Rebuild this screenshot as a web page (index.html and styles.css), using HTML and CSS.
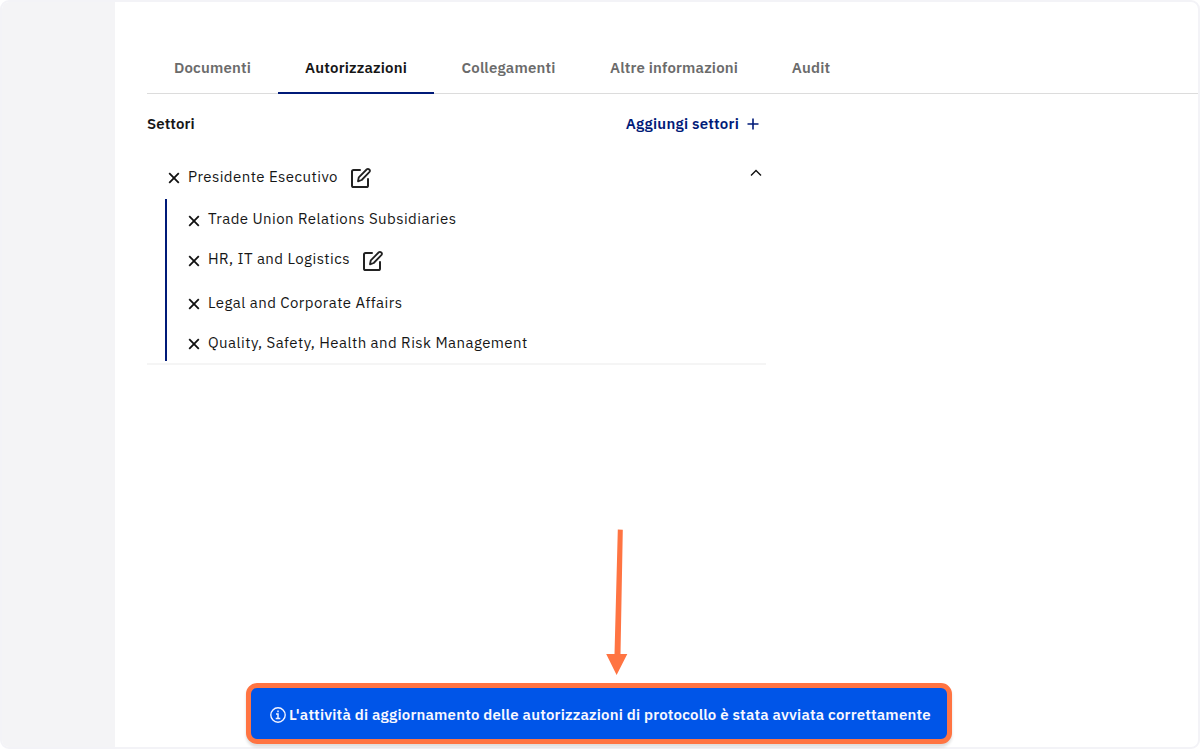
FILE: index.html
```html
<!DOCTYPE html>
<html lang="it">
<head>
<meta charset="utf-8">
<title>Autorizzazioni</title>
<link rel="stylesheet" href="styles.css">
</head>
<body>
<svg class="defs" aria-hidden="true">
  <symbol id="close" viewBox="0 0 12 12"><path d="M1.2 1.2l9.6 9.6M10.8 1.2L1.2 10.8" fill="none" stroke="#111" stroke-width="1.800"/></symbol>
  <symbol id="edit" viewBox="0 0 22 22"><g fill="none" stroke="#222" stroke-width="2" stroke-linejoin="round" stroke-linecap="round"><path d="M10 3H3.600Q2 3 2 4.600V18.400Q2 20 3.600 20H16.400Q18 20 18 18.400V12"/><path d="M8 14.300l.8-4L16.600 2.500q1.300-1.200 2.700 0 1.300 1.300 0 2.700L11.700 13z" stroke-width="1.800"/></g></symbol>
</svg>
<div class="frame">
  <aside class="sidebar"></aside>
  <main class="content">
    <nav class="tabs">
      <a class="tab documents"><span>Documenti</span></a>
      <a class="tab permissions active"><span>Autorizzazioni</span></a>
      <a class="tab links"><span>Collegamenti</span></a>
      <a class="tab info"><span>Altre informazioni</span></a>
      <a class="tab audit"><span>Audit</span></a>
    </nav>
    <section class="sectors">
      <header class="sectors-head">
        <h2>Settori</h2>
        <a class="add"><span>Aggiungi settori</span><svg width="12" height="12" viewBox="0 0 12 12"><path d="M6 .5v11M.5 6h11" stroke="#001a78" stroke-width="1.600"/></svg></a>
      </header>
      <div class="tree">
        <div class="root">
          <svg class="x"><use href="#close"/></svg><span class="label">Presidente Esecutivo</span><svg class="edit"><use href="#edit"/></svg>
          <svg class="chevron" viewBox="0 0 12 8"><path d="M1 6.500l5-5 5 5" fill="none" stroke="#111" stroke-width="1.400"/></svg>
        </div>
        <div class="children">
          <div class="row trade"><svg class="x"><use href="#close"/></svg><span class="label">Trade Union Relations Subsidiaries</span></div>
          <div class="row hr"><svg class="x"><use href="#close"/></svg><span class="label">HR, IT and Logistics</span><svg class="edit"><use href="#edit"/></svg></div>
          <div class="row legal"><svg class="x"><use href="#close"/></svg><span class="label">Legal and Corporate Affairs</span></div>
          <div class="row quality"><svg class="x"><use href="#close"/></svg><span class="label">Quality, Safety, Health and Risk Management</span></div>
        </div>
      </div>
    </section>
  </main>
</div>
<svg class="arrow" viewBox="0 0 30 150"><path d="M12.800 4.500L17.800 4.700 15.500 129H22.300L11.600 150 1.200 129H9.500z" fill="#ff7442"/></svg>
<div class="toast">
  <svg width="16" height="16" viewBox="0 0 16 16"><circle cx="8" cy="8" r="7.200" fill="none" stroke="#f2f4ff" stroke-width="1.400"/><path d="M8 3.500v1.800M6 7h2v4.500M5.700 11.500h4.600" fill="none" stroke="#f2f4ff" stroke-width="1.500"/></svg>
  <span>L'attività di aggiornamento delle autorizzazioni di protocollo è stata avviata correttamente</span>
</div>
</body>
</html>
```
FILE: styles.css
```css
* { box-sizing: border-box; }
body { margin: 0; width: 1200px; height: 749px; overflow: hidden; background: #fff; font-family: "IBM Plex Sans", "Noto Sans", sans-serif; font-size: 15px; color: #161616; }
.defs { position: absolute; width: 0; height: 0; }
.frame { display: flex; width: 1200px; height: 749px; border: 2px solid #f3f3f7; border-radius: 9px; overflow: hidden; }
.sidebar { width: 113px; background: #f4f4f6; }
.content { flex: 1; padding: 40px 0 0 32px; }
.tabs { display: flex; height: 52px; border-bottom: 1px solid #dcdcdc; }
.tab { display: flex; justify-content: center; height: 52px; padding-top: 16px; line-height: 20px; font-weight: 600; letter-spacing: .18px; color: #6b6b6b; white-space: nowrap; }
.tab.active { color: #161616; border-bottom: 2px solid #001a78; }
.documents { width: 131px; }
.permissions { width: 156px; }
.links { width: 149px; }
.info { width: 182px; }
.audit { width: 92px; }
.sectors { width: 619px; height: 271px; border-bottom: 2px solid #f5f5f5; }
.sectors-head { display: flex; justify-content: space-between; align-items: center; padding: 19px 7px 0 0; height: 40px; }
h2 { margin: 0; font-size: 15px; font-weight: 600; line-height: 20px; letter-spacing: .1px; }
.add { display: flex; align-items: center; gap: 8px; font-weight: 600; line-height: 20px; letter-spacing: .23px; color: #001a78; }
.tree { padding: 30px 0 0 18px; }
.root { display: flex; align-items: center; height: 28px; padding: 0 4px 0 3px; }
.label { line-height: 20px; letter-spacing: .44px; padding-bottom: 2px; white-space: nowrap; }
.x { width: 12px; height: 12px; margin-right: 8px; flex: none; }
.edit { width: 22px; height: 22px; margin-left: 12px; flex: none; }
.chevron { width: 12px; height: 8px; margin: -11px 0 0 auto; }
.children { height: 162px; margin-top: 7px; border-left: 2px solid #001a78; padding-left: 21px; }
.row { display: flex; align-items: center; }
.trade { height: 44px; }
.hr { height: 36px; }
.legal { height: 49px; }
.quality { height: 31px; }
.trade .label, .hr .label { padding-bottom: 4px; }
.toast { position: absolute; left: 246px; top: 683px; width: 706px; height: 61px; display: flex; align-items: center; gap: 3px; padding: 2px 0 0 19px; border: 5px solid #ff7442; border-radius: 11px; background: #0055e8; color: #f8f8ff; font-weight: 600; letter-spacing: .2px; box-shadow: 0 3px 3px #0002; white-space: nowrap; }
.arrow { position: absolute; left: 605px; top: 525px; width: 30px; height: 150px; }
```
